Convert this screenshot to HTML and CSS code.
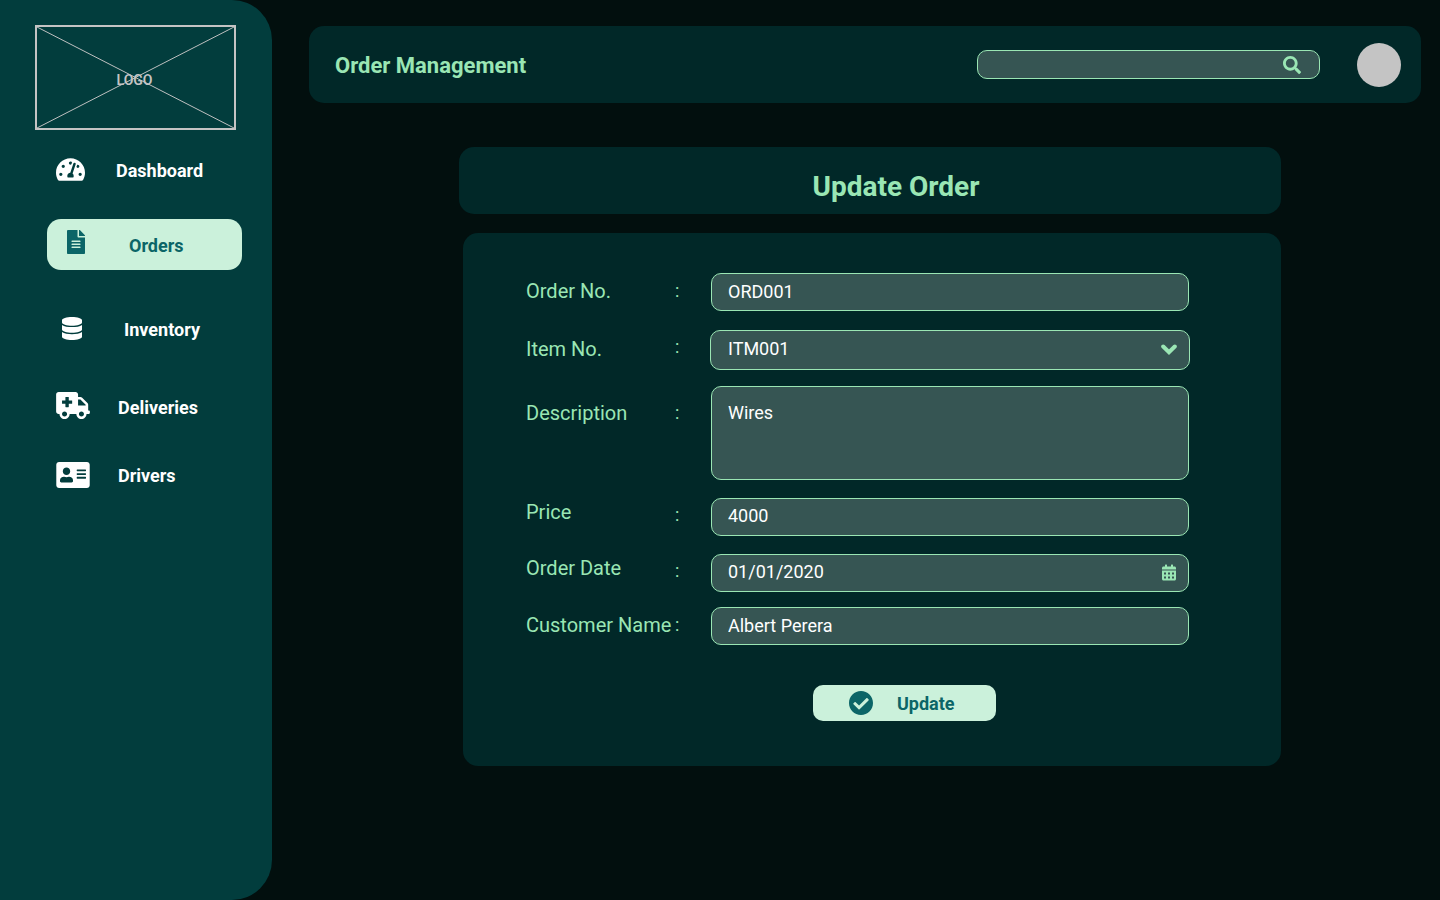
FILE: index.html
```html
<!DOCTYPE html>
<html lang="en">
<head>
<meta charset="utf-8">
<meta name="viewport" content="width=device-width, initial-scale=1">
<title>Order Management</title>
<link rel="stylesheet" href="styles.css">
</head>
<body>
<div class="app">
  <aside class="sidebar">
    <div class="logo">
      <svg class="logo-lines" viewBox="0 0 200 104" preserveAspectRatio="none" aria-hidden="true"><path d="M0 0L200 104M0 104L200 0"/></svg>
      <span class="logo-text">LOGO</span>
    </div>
    <nav class="nav">
      <a class="nav-link nav-dashboard" href="#">
        <svg viewBox="0 32 576 448" width="29" height="23" aria-hidden="true"><path d="M288 32C128.94 32 0 160.94 0 320c0 52.8 14.25 102.26 39.06 144.8 5.61 9.62 16.3 15.2 27.44 15.2h443c11.14 0 21.83-5.58 27.44-15.2C561.75 422.26 576 372.8 576 320c0-159.06-128.94-288-288-288zm0 64c14.71 0 26.58 10.13 30.32 23.65-1.11 2.26-2.64 4.23-3.45 6.67l-9.22 27.67c-5.13 3.49-10.97 6.01-17.64 6.01-17.67 0-32-14.33-32-32S270.33 96 288 96zM96 384c-17.67 0-32-14.33-32-32s14.33-32 32-32 32 14.33 32 32-14.33 32-32 32zm48-160c-17.67 0-32-14.33-32-32s14.33-32 32-32 32 14.33 32 32-14.33 32-32 32zm246.77-72.41l-61.33 184C343.13 347.33 352 364.54 352 384c0 11.72-3.38 22.55-8.88 32H232.88c-5.5-9.45-8.88-20.28-8.88-32 0-33.94 26.5-61.43 59.9-63.59l61.34-184.01c4.17-12.56 17.73-19.45 30.36-15.17 12.57 4.19 19.35 17.79 15.17 30.36zm14.66 57.2l15.52-46.55c3.47-1.29 7.13-2.23 11.05-2.23 17.67 0 32 14.33 32 32s-14.33 32-32 32c-11.38-.01-20.89-6.28-26.57-15.22zM480 384c-17.67 0-32-14.33-32-32s14.33-32 32-32 32 14.33 32 32-14.33 32-32 32z"/></svg>
        <span>Dashboard</span>
      </a>
      <a class="nav-link nav-orders" href="#" aria-current="page">
        <svg viewBox="0 0 384 512" width="18" height="24" aria-hidden="true"><path d="M224 136V0H24C10.7 0 0 10.7 0 24v464c0 13.3 10.7 24 24 24h336c13.3 0 24-10.7 24-24V160H248c-13.2 0-24-10.8-24-24zm64 236c0 6.6-5.4 12-12 12H108c-6.6 0-12-5.4-12-12v-8c0-6.6 5.4-12 12-12h168c6.6 0 12 5.4 12 12v8zm0-64c0 6.6-5.4 12-12 12H108c-6.6 0-12-5.4-12-12v-8c0-6.6 5.4-12 12-12h168c6.6 0 12 5.4 12 12v8zm0-72v8c0 6.6-5.4 12-12 12H108c-6.6 0-12-5.4-12-12v-8c0-6.6 5.4-12 12-12h168c6.6 0 12 5.4 12 12zm96-114.1v6.1H256V0h6.1c6.4 0 12.5 2.5 17 7l97.9 98c4.5 4.5 7 10.6 7 16.9z"/></svg>
        <span>Orders</span>
      </a>
      <a class="nav-link nav-inventory" href="#">
        <svg viewBox="0 0 448 512" width="20" height="23" aria-hidden="true"><path d="M448 73.143v45.714C448 159.143 347.667 192 224 192S0 159.143 0 118.857V73.143C0 32.857 100.333 0 224 0s224 32.857 224 73.143zM448 176v102.857C448 319.143 347.667 352 224 352S0 319.143 0 278.857V176c48.125 33.143 136.208 48.572 224 48.572S399.874 209.143 448 176zm0 160v102.857C448 479.143 347.667 512 224 512S0 479.143 0 438.857V336c48.125 33.143 136.208 48.572 224 48.572S399.874 369.143 448 336z"/></svg>
        <span>Inventory</span>
      </a>
      <a class="nav-link nav-deliveries" href="#">
        <svg viewBox="0 0 640 512" width="34" height="27" aria-hidden="true"><path d="M624 352h-16V243.9c0-12.7-5.1-24.9-14.1-33.9L494 110.1c-9-9-21.2-14.1-33.9-14.1H416V48c0-26.5-21.5-48-48-48H48C21.5 0 0 21.5 0 48v320c0 26.5 21.5 48 48 48h16c0 53 43 96 96 96s96-43 96-96h128c0 53 43 96 96 96s96-43 96-96h48c8.8 0 16-7.2 16-16v-32c0-8.8-7.2-16-16-16zM160 464c-26.5 0-48-21.5-48-48s21.5-48 48-48 48 21.5 48 48-21.5 48-48 48zm144-248c0 4.4-3.6 8-8 8h-56v56c0 4.4-3.6 8-8 8h-48c-4.4 0-8-3.6-8-8v-56h-56c-4.4 0-8-3.6-8-8v-48c0-4.4 3.6-8 8-8h56v-56c0-4.4 3.6-8 8-8h48c4.4 0 8 3.6 8 8v56h56c4.4 0 8 3.6 8 8v48zm176 248c-26.5 0-48-21.5-48-48s21.5-48 48-48 48 21.5 48 48-21.5 48-48 48zm80-208H416V144h44.1l99.9 99.9V256z"/></svg>
        <span>Deliveries</span>
      </a>
      <a class="nav-link nav-drivers" href="#">
        <svg viewBox="0 32 576 448" width="34" height="26" aria-hidden="true"><path d="M528 32H48C21.5 32 0 53.5 0 80v352c0 26.5 21.5 48 48 48h480c26.5 0 48-21.5 48-48V80c0-26.5-21.5-48-48-48zm-352 96c35.3 0 64 28.7 64 64s-28.7 64-64 64-64-28.7-64-64 28.7-64 64-64zm112 236.8c0 10.6-10 19.2-22.4 19.2H86.4C74 384 64 375.4 64 364.8v-19.2c0-31.8 30.1-57.6 67.2-57.6h5c12.3 5.1 25.7 8 39.8 8s27.6-2.9 39.8-8h5c37.1 0 67.2 25.8 67.2 57.6v19.2zM512 312c0 4.4-3.6 8-8 8H360c-4.4 0-8-3.6-8-8v-16c0-4.4 3.6-8 8-8h144c4.4 0 8 3.6 8 8v16zm0-64c0 4.4-3.6 8-8 8H360c-4.4 0-8-3.6-8-8v-16c0-4.4 3.6-8 8-8h144c4.4 0 8 3.6 8 8v16zm0-64c0 4.4-3.6 8-8 8H360c-4.4 0-8-3.6-8-8v-16c0-4.4 3.6-8 8-8h144c4.4 0 8 3.6 8 8v16z"/></svg>
        <span>Drivers</span>
      </a>
    </nav>
  </aside>

  <main class="main">
    <header class="topbar">
      <h1 class="page-title">Order Management</h1>
      <form class="search" role="search">
        <input class="search-input" type="text" aria-label="Search">
        <button class="icon-button" type="button" aria-label="Search">
          <svg viewBox="0 0 512 512" width="18" height="18" aria-hidden="true"><path d="M505 442.7L405.3 343c-4.5-4.5-10.6-7-17-7H372c27.6-35.3 44-79.7 44-128C416 93.1 322.9 0 208 0S0 93.1 0 208s93.1 208 208 208c48.3 0 92.7-16.4 128-44v16.3c0 6.4 2.5 12.5 7 17l99.7 99.7c9.4 9.4 24.6 9.4 33.9 0l28.3-28.3c9.4-9.4 9.4-24.6.1-34zM208 336c-70.7 0-128-57.2-128-128 0-70.7 57.2-128 128-128 70.7 0 128 57.2 128 128 0 70.7-57.2 128-128 128z"/></svg>
        </button>
      </form>
      <div class="avatar"></div>
    </header>

    <div class="content">
      <div class="title-card"><h2 class="card-title">Update Order</h2></div>

      <form class="form-card">
        <div class="row">
          <label for="order-no">Order No.</label><span class="colon">:</span>
          <input class="field" id="order-no" type="text" value="ORD001">
        </div>
        <div class="row row-item">
          <label for="item-no">Item No.</label><span class="colon">:</span>
          <div class="field-wrap">
            <select class="field" id="item-no"><option>ITM001</option></select>
            <svg class="chevron" viewBox="0 0 16 11" width="16" height="11" aria-hidden="true"><path d="M2.200 2.500L8 8.200L13.800 2.500"/></svg>
          </div>
        </div>
        <div class="row row-description">
          <label for="description">Description</label><span class="colon">:</span>
          <textarea class="field" id="description">Wires</textarea>
        </div>
        <div class="row row-raised">
          <label for="price">Price</label><span class="colon">:</span>
          <input class="field" id="price" type="text" value="4000">
        </div>
        <div class="row row-raised">
          <label for="order-date">Order Date</label><span class="colon">:</span>
          <div class="field-wrap">
            <input class="field" id="order-date" type="text" value="01/01/2020">
            <button class="icon-button date-button" type="button" aria-label="Choose date">
              <svg viewBox="0 0 448 512" width="14" height="17" aria-hidden="true"><path fill-rule="evenodd" d="M0 464c0 26.500 21.500 48 48 48h352c26.500 0 48-21.500 48-48V192H0zM64 256h64v64H64zM192 256h64v64h-64zM320 256h64v64h-64zM64 384h64v64H64zM192 384h64v64h-64zM320 384h64v64h-64zM400 64h-48V16c0-8.800-7.200-16-16-16h-32c-8.800 0-16 7.200-16 16v48H160V16c0-8.800-7.200-16-16-16h-32c-8.800 0-16 7.200-16 16v48H48C21.500 64 0 85.500 0 112v48h448v-48c0-26.500-21.500-48-48-48z"/></svg>
            </button>
          </div>
        </div>
        <div class="row row-customer">
          <label for="customer">Customer Name</label><span class="colon">:</span>
          <input class="field" id="customer" type="text" value="Albert Perera">
        </div>
        <button class="update-button" type="button">
          <svg viewBox="8 8 496 496" width="24" height="24" aria-hidden="true"><path d="M504 256c0 136.967-111.033 248-248 248S8 392.967 8 256 119.033 8 256 8s248 111.033 248 248zM227.314 387.314l184-184c6.248-6.248 6.248-16.379 0-22.627l-22.627-22.627c-6.248-6.249-16.379-6.249-22.628 0L216 308.118l-70.059-70.059c-6.248-6.248-16.379-6.248-22.628 0l-22.627 22.627c-6.248 6.248-6.248 16.379 0 22.627l104 104c6.249 6.249 16.379 6.249 22.628.001z"/></svg>
          <span>Update</span>
        </button>
      </form>
    </div>
  </main>
</div>
</body>
</html>
```
FILE: styles.css
```css
:root {
  --page: #020f0e;
  --sidebar: #023d3d;
  --panel: #012828;
  --field: #365553;
  --green: #9ae6b4;
  --mint: #cbf1db;
  --teal: #0b6567;
  --grey: #c4c4c4;
}

* { box-sizing: border-box; }

body {
  margin: 0;
  background: var(--page);
  color: #fff;
  font-family: Roboto, "Liberation Sans", sans-serif;
  font-size: 18px;
}

input, select, textarea, button { font: inherit; }
svg { display: block; flex: none; fill: currentColor; }
h1, h2 { margin: 0; font-weight: 700; }

.app { display: flex; min-height: 100vh; }

/* Sidebar */
.sidebar {
  flex: none;
  width: 272px;
  padding: 25px 30px 25px 35px;
  background: var(--sidebar);
  border-radius: 0 40px 40px 0;
}

.logo {
  display: grid;
  width: 201px;
  height: 105px;
  border: 2px solid var(--grey);
  color: var(--grey);
}
.logo-lines, .logo-text { grid-area: 1 / 1; }
.logo-lines { width: 100%; height: 101px; fill: none; stroke: currentColor; }
.logo-text {
  place-self: center;
  padding: 4px 2px 0 0;
  font-size: 14px;
  line-height: 16px;
  font-weight: 600;
}

.nav {
  display: flex;
  flex-direction: column;
  padding: 15px 0 0 12px;
}
.nav-link {
  display: flex;
  align-items: center;
  height: 51px;
  width: 195px;
  color: #fff;
  font-weight: 700;
  text-decoration: none;
}
.nav-link svg { margin-bottom: 2px; }
.nav-dashboard { gap: 31px; padding-left: 9px; }
.nav-orders {
  gap: 44px;
  margin-top: 23px;
  padding: 2px 0 0 20px;
  border-radius: 14px;
  background: var(--mint);
  color: var(--teal);
}
.nav-orders svg { margin-bottom: 8px; }
.nav-inventory { gap: 42px; margin-top: 34px; padding-left: 15px; }
.nav-deliveries { gap: 28px; margin-top: 27px; padding-left: 9px; }
.nav-deliveries svg { margin-bottom: 4px; }
.nav-drivers { gap: 28px; margin-top: 17px; padding-left: 9px; }

/* Top bar */
.main { flex: 1; min-width: 0; padding: 26px 19px 26px 37px; }
.topbar {
  display: flex;
  align-items: center;
  height: 77px;
  padding: 0 20px 0 26px;
  border-radius: 15px;
  background: var(--panel);
}
.page-title {
  flex: 1;
  padding-top: 2px;
  color: var(--green);
  font-size: 22px;
  line-height: 28px;
}
.search {
  display: flex;
  align-items: center;
  width: 343px;
  height: 29px;
  padding-right: 18px;
  border: 1px solid var(--green);
  border-radius: 10px;
  background: var(--field);
}
.search-input {
  flex: 1;
  min-width: 0;
  padding: 0 16px;
  border: 0;
  outline: 0;
  background: none;
  color: #fff;
}
.icon-button {
  padding: 0;
  border: 0;
  background: none;
  color: var(--green);
  cursor: pointer;
}
.avatar {
  width: 44px;
  height: 44px;
  margin-left: 37px;
  border-radius: 50%;
  background: var(--grey);
}

/* Order form */
.content { padding: 44px 140px 0 150px; }
.title-card {
  height: 67px;
  padding: 24px 0 0 52px;
  border-radius: 15px;
  background: var(--panel);
  text-align: center;
}
.card-title { color: var(--green); font-size: 28px; line-height: 32px; }

.form-card {
  display: flex;
  flex-direction: column;
  gap: 18px;
  margin: 19px 0 0 4px;
  padding: 40px 92px 45px 63px;
  border-radius: 15px;
  background: var(--panel);
}
.row {
  display: grid;
  grid-template-columns: 149px 36px 1fr;
  align-items: start;
  color: var(--green);
  line-height: 36px;
}
.row label { font-size: 20px; white-space: nowrap; }
.row-item { margin-top: 1px; line-height: 34px; }
.row-item label { line-height: 38px; }
.row-description { margin-top: -2px; line-height: 54px; }
.row-raised { line-height: 34px; }
.row-raised label { line-height: 28px; }
.row-customer { margin-top: -3px; }

.field {
  display: block;
  width: 100%;
  height: 38px;
  margin: 0;
  padding: 0 16px 2px;
  border: 1px solid var(--green);
  border-radius: 10px;
  outline: 0;
  background: var(--field);
  color: #fff;
  line-height: 22px;
  appearance: none;
}
textarea.field { height: 94px; padding: 15px 16px; resize: none; }
.row-raised .field { padding-bottom: 4px; }
.field-wrap { position: relative; }
.row-item .field-wrap { margin: 0 -1px; }
.row-item .field { height: 40px; padding-left: 17px; }
.chevron {
  position: absolute;
  top: 14px;
  right: 13px;
  fill: none;
  stroke: var(--green);
  stroke-width: 4;
  stroke-linecap: round;
  pointer-events: none;
}
.date-button { position: absolute; top: 10px; right: 13px; }

.update-button {
  display: flex;
  align-items: center;
  gap: 24px;
  width: 183px;
  height: 36px;
  margin: 22px 0 0 287px;
  padding: 0 0 0 36px;
  border: 0;
  border-radius: 10px;
  background: var(--mint);
  color: var(--teal);
  font-weight: 700;
  cursor: pointer;
}
```
